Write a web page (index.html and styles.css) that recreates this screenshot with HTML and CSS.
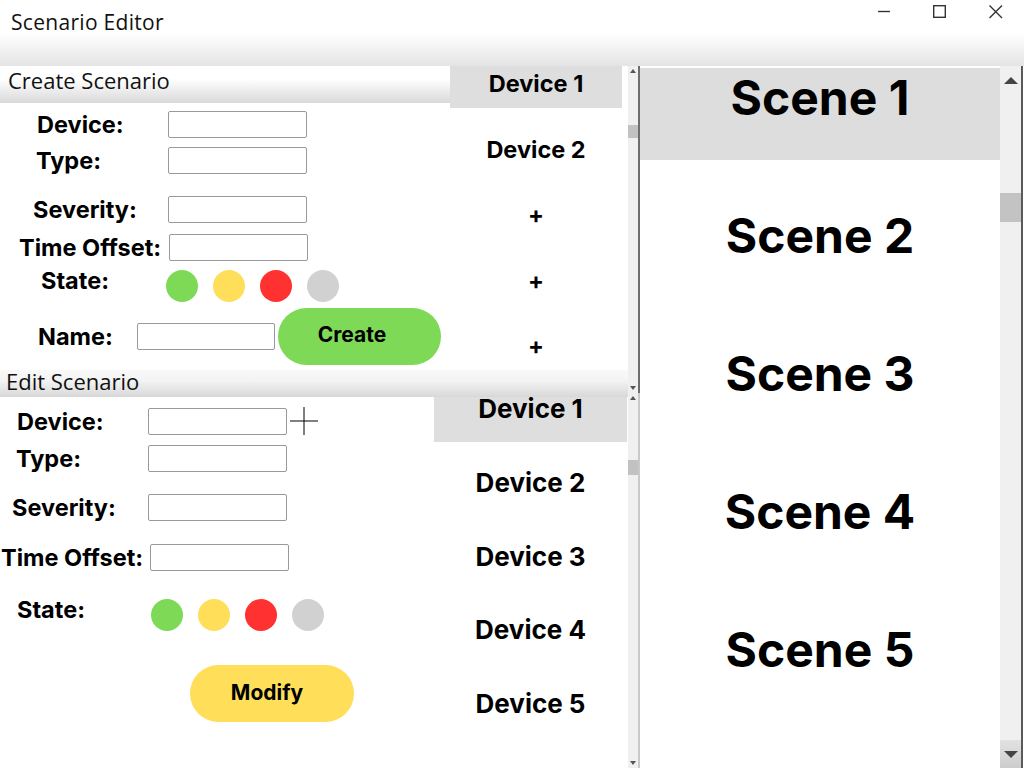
FILE: index.html
```html
<!DOCTYPE html>
<html lang="en">
<head>
<meta charset="utf-8">
<title>Scenario Editor</title>
<link rel="stylesheet" href="styles.css">
</head>
<body>
<div class="window">
  <header class="titlebar">
    <span class="title">Scenario Editor</span>
    <div class="controls">
      <svg class="ctl" width="18" height="18" viewBox="0 0 18 18"><path d="M3 8.5H15" stroke="#333" stroke-width="1.4" fill="none"/></svg>
      <svg class="ctl" width="18" height="18" viewBox="0 0 18 18"><rect x="2.7" y="2.7" width="11.6" height="11.6" stroke="#333" stroke-width="1.4" fill="none"/></svg>
      <svg class="ctl" width="18" height="18" viewBox="0 0 18 18"><path d="M2.5 2.5L15 15M15 2.5L2.5 15" stroke="#333" stroke-width="1.4" fill="none"/></svg>
    </div>
  </header>

  <main class="main">
    <section class="left">
      <div class="left-content">
        <div class="create">
          <div class="create-form">
            <div class="panel-head">Create Scenario</div>
            <div class="form form-create">
              <div class="row"><span class="lbl">Device:</span><input class="field" type="text"></div>
              <div class="row"><span class="lbl">Type:</span><input class="field" type="text"></div>
              <div class="row"><span class="lbl">Severity:</span><input class="field" type="text"></div>
              <div class="row"><span class="lbl">Time Offset:</span><input class="field" type="text"></div>
              <div class="row row-state"><span class="lbl lbl-state">State:</span>
                <div class="dots"><span class="dot green"></span><span class="dot yellow"></span><span class="dot red"></span><span class="dot grey"></span></div>
              </div>
              <div class="row row-name"><span class="lbl">Name:</span><input class="field" type="text"><button class="btn btn-create">Create</button></div>
            </div>
          </div>
          <ul class="devices devices-create">
            <li class="active">Device 1</li>
            <li>Device 2</li>
            <li>+</li>
            <li>+</li>
            <li>+</li>
          </ul>
        </div>

        <div class="edit">
          <div class="panel-head edit-head">Edit Scenario</div>
          <div class="edit-body">
            <div class="form form-edit">
              <div class="row row-cursor"><span class="lbl">Device:</span><input class="field" type="text">
                <svg class="cursor" width="28" height="28" viewBox="0 0 28 28"><path d="M14 0V28M0 14H28" stroke="#000" stroke-width="1" fill="none"/></svg>
              </div>
              <div class="row"><span class="lbl">Type:</span><input class="field" type="text"></div>
              <div class="row"><span class="lbl">Severity:</span><input class="field" type="text"></div>
              <div class="row"><span class="lbl">Time Offset:</span><input class="field" type="text"></div>
              <div class="row row-state"><span class="lbl lbl-state">State:</span>
                <div class="dots"><span class="dot green"></span><span class="dot yellow"></span><span class="dot red"></span><span class="dot grey"></span></div>
              </div>
              <div class="row row-modify"><button class="btn btn-modify">Modify</button></div>
            </div>
            <ul class="devices devices-edit">
              <li class="active">Device 1</li>
              <li>Device 2</li>
              <li>Device 3</li>
              <li>Device 4</li>
              <li>Device 5</li>
            </ul>
          </div>
        </div>
      </div>

      <div class="left-scroll">
        <div class="sb sb-top">
          <div class="sb-btn"><span class="tri-up"></span></div>
          <div class="sb-track"><div class="thumb"></div></div>
          <div class="sb-btn"><span class="tri-down"></span></div>
        </div>
        <div class="sb sb-bottom">
          <div class="sb-btn"><span class="tri-up"></span></div>
          <div class="sb-track"><div class="thumb"></div></div>
          <div class="sb-btn"><span class="tri-down"></span></div>
        </div>
      </div>
    </section>

    <section class="scenes">
      <ul class="scene-list">
        <li class="active">Scene 1</li>
        <li>Scene 2</li>
        <li>Scene 3</li>
        <li>Scene 4</li>
        <li>Scene 5</li>
      </ul>
      <div class="sb sb-right">
        <div class="sb-btn"><span class="tri-up"></span></div>
        <div class="sb-track"><div class="thumb"></div></div>
        <div class="sb-btn sb-btn-down"><span class="tri-down"></span></div>
      </div>
    </section>
  </main>
</div>
</body>
</html>
```

FILE: styles.css
```css
* { box-sizing: border-box; margin: 0; padding: 0; }

html, body {
  width: 1024px;
  height: 768px;
  overflow: hidden;
  background: #fff;
}

body {
  font-family: Inter, "Open Sans", sans-serif;
  color: #000;
}

.window {
  display: flex;
  flex-direction: column;
  height: 768px;
}

/* ---------- title bar ---------- */
.titlebar {
  height: 66px;
  flex: none;
  display: flex;
  justify-content: space-between;
  align-items: flex-start;
  background: linear-gradient(#ffffff 0%, #ffffff 50%, #e4e4e4 100%);
}

.title {
  font-family: "Open Sans", sans-serif;
  font-size: 21px;
  line-height: 28px;
  margin: 8px 0 0 11px;
  color: #111;
  letter-spacing: 0.3px;
}

.controls {
  display: flex;
  gap: 38px;
  margin-top: 3px;
  padding-right: 19px;
}

.ctl { display: block; }

/* ---------- main ---------- */
.main {
  flex: 1;
  display: flex;
  height: 702px;
}

.left {
  width: 640px;
  display: flex;
}

.left-content {
  width: 628px;
  display: flex;
  flex-direction: column;
}

.panel-head {
  font-family: "Open Sans", sans-serif;
  font-size: 22px;
  color: #111;
  padding-left: 8px;
  background: linear-gradient(#ffffff 0%, #ffffff 35%, #d9d9d9 100%);
}

/* ---------- create ---------- */
.create {
  height: 304px;
  display: grid;
  grid-template-columns: 450px 178px;
  overflow: hidden;
}

.create .panel-head {
  height: 37px;
  line-height: 28px;
}

.form {
  display: flex;
  flex-direction: column;
}

.row {
  display: flex;
  align-items: center;
  height: 27px;
  position: relative;
}

.lbl {
  font-weight: 700;
  font-size: 23.5px;
  white-space: nowrap;
  flex: none;
}

.field {
  width: 139px;
  height: 27px;
  border: 1px solid #999;
  border-radius: 2px;
  background: #fff;
  flex: none;
}

.row-state { height: 32px; }
.lbl-state { margin-top: -12px; }

.dots {
  display: flex;
  gap: 15px;
}

.dot {
  width: 32px;
  height: 32px;
  border-radius: 50%;
  display: block;
}
.green { background: #7ed957; }
.yellow { background: #ffde59; }
.red { background: #ff3131; }
.grey { background: #d1d1d1; }

.btn {
  border: none;
  height: 57px;
  border-radius: 29px;
  font-family: Inter, sans-serif;
  font-weight: 700;
  font-size: 21px;
  color: #000;
  flex: none;
}

.btn-create {
  width: 163px;
  margin-left: 3px;
  background: #7ed957;
  padding-bottom: 4px;
  padding-right: 15px;
}

.btn-modify {
  width: 164px;
  background: #ffde59;
  padding-bottom: 3px;
  padding-right: 10px;
}

/* create form rows */
.form-create { padding-top: 8px; }
.form-create .row:nth-child(2) { margin-top: 9px; }
.form-create .row:nth-child(3) { margin-top: 22px; }
.form-create .row:nth-child(4) { margin-top: 11px; }
.form-create .row:nth-child(5) { margin-top: 9px; }
.form-create .row:nth-child(6) { margin-top: 6px; height: 57px; }

.form-create .lbl { width: 168px; }
.form-create .row:nth-child(1) .lbl { padding-left: 37px; }
.form-create .row:nth-child(2) .lbl { padding-left: 36px; }
.form-create .row:nth-child(3) .lbl { padding-left: 33px; }
.form-create .row:nth-child(4) .lbl { padding-left: 19px; width: 169px; }
.form-create .row:nth-child(5) .lbl { padding-left: 41px; width: 166px; }
.form-create .row:nth-child(6) .lbl { padding-left: 38px; width: 137px; }
.form-create .row:nth-child(6) .field { width: 138px; }

/* device lists */
.devices {
  list-style: none;
}

.devices li {
  font-weight: 700;
  text-align: center;
}

.devices-create li {
  width: 172px;
  height: 42px;
  line-height: 36px;
  font-size: 23.5px;
  margin-bottom: 23.5px;
}

.devices li.active { background: #dedede; }

/* ---------- edit ---------- */
.edit {
  flex: 1;
  display: flex;
  flex-direction: column;
}

.edit-head {
  height: 27px;
  line-height: 22px;
  padding-left: 6px;
  background: linear-gradient(#f9f9f9 0%, #f3f3f3 40%, #d8d8d8 100%);
}

.edit-body {
  flex: 1;
  display: grid;
  grid-template-columns: 434px 194px;
}

.form-edit { padding-top: 11px; }
.form-edit .row:nth-child(2) { margin-top: 10px; }
.form-edit .row:nth-child(3) { margin-top: 22px; }
.form-edit .row:nth-child(4) { margin-top: 23px; }
.form-edit .row:nth-child(5) { margin-top: 28px; }
.form-edit .row:nth-child(6) { margin-top: 34px; height: 57px; padding-left: 190px; }

.form-edit .lbl { width: 148px; }
.form-edit .row:nth-child(1) .lbl { padding-left: 17px; }
.form-edit .row:nth-child(2) .lbl { padding-left: 16px; }
.form-edit .row:nth-child(3) .lbl { padding-left: 12px; }
.form-edit .row:nth-child(4) .lbl { padding-left: 1px; width: 150px; }
.form-edit .row:nth-child(5) .lbl { padding-left: 17px; width: 151px; }

.cursor {
  position: absolute;
  left: 290px;
  top: -1px;
}

.devices-edit li {
  width: 193px;
  height: 45px;
  line-height: 24px;
  font-size: 26px;
  margin-bottom: 28.75px;
}

/* ---------- scrollbars ---------- */
.left-scroll {
  width: 12px;
  display: flex;
  flex-direction: column;
}

.sb {
  display: flex;
  flex-direction: column;
  background: #f0f0f0;
}

.sb-top {
  height: 327px;
  border-right: 2px solid #6e6e6e;
}

.sb-bottom {
  flex: 1;
  border-right: 2px solid #c9c9c9;
}

.sb-btn {
  height: 10px;
  display: flex;
  align-items: center;
  justify-content: center;
  flex: none;
}

.sb-track {
  flex: 1;
}

.tri-up {
  width: 0;
  height: 0;
  border-left: 3px solid transparent;
  border-right: 3px solid transparent;
  border-bottom: 4px solid #555;
}

.tri-down {
  width: 0;
  height: 0;
  border-left: 3px solid transparent;
  border-right: 3px solid transparent;
  border-top: 4px solid #555;
}

.left-scroll .thumb {
  width: 10px;
  height: 13px;
  background: #c2c2c2;
}

.sb-top .thumb { margin-top: 49px; }
.sb-bottom .thumb { margin-top: 57px; height: 15px; }

/* ---------- scenes ---------- */
.scenes {
  flex: 1;
  display: flex;
}

.scene-list {
  list-style: none;
  width: 360px;
  padding-top: 2px;
}

.scene-list li {
  height: 92px;
  line-height: 60px;
  margin-bottom: 46px;
  font-weight: 700;
  font-size: 48px;
  text-align: center;
}

.scene-list li.active { background: #dddddd; }

.sb-right {
  width: 23px;
  border-right: 2px solid #5a5a5a;
}

.sb-right .sb-btn { height: 28px; }

.sb-right .tri-up,
.sb-right .tri-down {
  border-left-width: 7px;
  border-right-width: 7px;
}
.sb-right .tri-up { border-bottom-width: 7px; border-bottom-color: #444; }
.sb-right .tri-down { border-top-width: 7px; border-top-color: #444; }

.sb-right .thumb {
  width: 21px;
  height: 29px;
  margin-top: 99px;
  background: #c3c3c3;
}

.sb-btn-down {
  background: linear-gradient(#e2e2e2, #cdcdcd);
}
```
